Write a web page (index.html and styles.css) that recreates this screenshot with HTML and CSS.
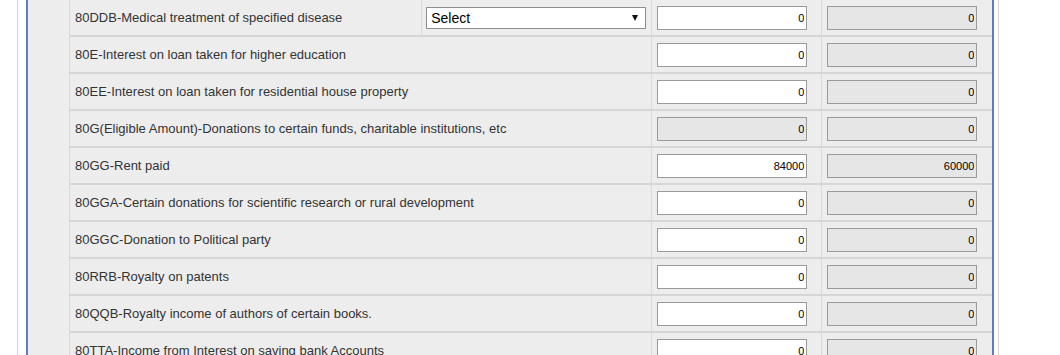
FILE: index.html
```html
<!doctype html>
<html>
<head>
<meta charset="utf-8">
<title>Deductions</title>
<link rel="stylesheet" href="styles.css">
</head>
<body>
<div class="outer">
  <div class="panel">
    <table class="deduct">
      <colgroup>
        <col class="c-label"><col class="c-sel"><col class="c-amt"><col class="c-elig">
      </colgroup>
      <tr>
        <td class="label">80DDB-Medical treatment of specified disease</td>
        <td class="sel"><span class="select-wrap"><select><option>Select</option></select></span></td>
        <td class="amt"><input type="text" value="0"></td>
        <td class="amt"><input type="text" value="0" class="ro" readonly></td>
      </tr>
      <tr>
        <td class="label" colspan="2">80E-Interest on loan taken for higher education</td>
        <td class="amt"><input type="text" value="0"></td>
        <td class="amt"><input type="text" value="0" class="ro" readonly></td>
      </tr>
      <tr>
        <td class="label" colspan="2">80EE-Interest on loan taken for residential house property</td>
        <td class="amt"><input type="text" value="0"></td>
        <td class="amt"><input type="text" value="0" class="ro" readonly></td>
      </tr>
      <tr>
        <td class="label" colspan="2">80G(Eligible Amount)-Donations to certain funds, charitable institutions, etc</td>
        <td class="amt"><input type="text" value="0" class="ro" readonly></td>
        <td class="amt"><input type="text" value="0" class="ro" readonly></td>
      </tr>
      <tr>
        <td class="label" colspan="2">80GG-Rent paid</td>
        <td class="amt"><input type="text" value="84000"></td>
        <td class="amt"><input type="text" value="60000" class="ro" readonly></td>
      </tr>
      <tr>
        <td class="label" colspan="2">80GGA-Certain donations for scientific research or rural development</td>
        <td class="amt"><input type="text" value="0"></td>
        <td class="amt"><input type="text" value="0" class="ro" readonly></td>
      </tr>
      <tr>
        <td class="label" colspan="2">80GGC-Donation to Political party</td>
        <td class="amt"><input type="text" value="0"></td>
        <td class="amt"><input type="text" value="0" class="ro" readonly></td>
      </tr>
      <tr>
        <td class="label" colspan="2">80RRB-Royalty on patents</td>
        <td class="amt"><input type="text" value="0"></td>
        <td class="amt"><input type="text" value="0" class="ro" readonly></td>
      </tr>
      <tr>
        <td class="label" colspan="2">80QQB-Royalty income of authors of certain books.</td>
        <td class="amt"><input type="text" value="0"></td>
        <td class="amt"><input type="text" value="0" class="ro" readonly></td>
      </tr>
      <tr>
        <td class="label" colspan="2">80TTA-Income from Interest on saving bank Accounts</td>
        <td class="amt"><input type="text" value="0"></td>
        <td class="amt"><input type="text" value="0" class="ro" readonly></td>
      </tr>
    </table>
  </div>
</div>
</body>
</html>
```
FILE: styles.css
```css
html,body{margin:0;padding:0;}
body{background:#fff;font:13px "Liberation Sans",Arial,sans-serif;color:#333;overflow:hidden;}
.outer{margin-left:17px;width:980px;border-left:1px solid #d6d6d6;border-right:1px solid #d6d6d6;height:355px;}
.panel{margin-left:8px;width:923px;height:355px;background:#ededed;border-left:2px solid #5f7fb6;border-right:2px solid #5f7fb6;padding-left:41px;}
.deduct{border-collapse:collapse;width:923px;table-layout:fixed;margin-top:0;}
.c-label{width:352px;}
.c-sel{width:230px;}
.c-amt,.c-elig{width:170px;}
.deduct td{height:35px;padding:0;border-left:1px solid #dadada;border-bottom:2px solid #d6d6d6;vertical-align:middle;}
.deduct td.label{padding-left:5px;white-space:nowrap;}
.deduct td.sel{padding-left:4px;}
.deduct td.amt{padding-left:5px;}
.select-wrap{position:relative;display:block;width:220px;height:22px;}
.select-wrap select{-webkit-appearance:none;appearance:none;width:220px;height:22px;margin:0;padding:0 0 0 4px;border:1px solid #8e8e8e;border-radius:0;background:#fff;font:14px "Liberation Sans",Arial,sans-serif;color:#000;}
.select-wrap:after{content:"";position:absolute;right:8px;top:8px;border-left:3px solid transparent;border-right:3px solid transparent;border-top:6px solid #111;}
.amt input{box-sizing:border-box;width:150px;height:24px;margin:0;padding:0 2px 0 0;border:1px solid #9a9a9a;background:#fff;text-align:right;font:11px "Liberation Sans",Arial,sans-serif;color:#000;display:block;}
.amt input.ro{background:#e6e6e6;}
```
